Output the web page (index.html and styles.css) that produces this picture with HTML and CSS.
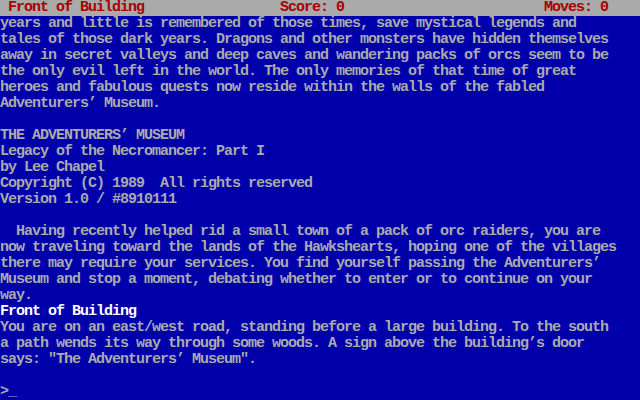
FILE: index.html
```html
<!DOCTYPE html>
<html>
<head>
<meta charset="utf-8">
<link rel="stylesheet" href="styles.css">
</head>
<body>
<div class="screen">
<div class="status"> Front of Building                 Score: 0                         Moves: 0</div>
<div class="text">
<div class="line">years and little is remembered of those times, save mystical legends and</div>
<div class="line">tales of those dark years. Dragons and other monsters have hidden themselves</div>
<div class="line">away in secret valleys and deep caves and wandering packs of orcs seem to be</div>
<div class="line">the only evil left in the world. The only memories of that time of great</div>
<div class="line">heroes and fabulous quests now reside within the walls of the fabled</div>
<div class="line">Adventurers’ Museum.</div>
<div class="line"> </div>
<div class="line">THE ADVENTURERS’ MUSEUM</div>
<div class="line">Legacy of the Necromancer: Part I</div>
<div class="line">by Lee Chapel</div>
<div class="line">Copyright (C) 1989  All rights reserved</div>
<div class="line">Version 1.0 / #8910111</div>
<div class="line"> </div>
<div class="line">  Having recently helped rid a small town of a pack of orc raiders, you are</div>
<div class="line">now traveling toward the lands of the Hawkshearts, hoping one of the villages</div>
<div class="line">there may require your services. You find yourself passing the Adventurers’</div>
<div class="line">Museum and stop a moment, debating whether to enter or to continue on your</div>
<div class="line">way.</div>
<div class="line bright">Front of Building</div>
<div class="line">You are on an east/west road, standing before a large building. To the south</div>
<div class="line">a path wends its way through some woods. A sign above the building’s door</div>
<div class="line">says: "The Adventurers’ Museum".</div>
<div class="line"> </div>
<div class="line">&gt;<span class="cursor">_</span></div>
</div>
</div>
</body>
</html>
```
FILE: styles.css
```css
html, body {
  margin: 0;
  padding: 0;
  background: #0000aa;
}
.screen {
  width: 640px;
  height: 400px;
  background: #0000aa;
  color: #aaaaaa;
  font-family: "Liberation Mono", "DejaVu Sans Mono", monospace;
  font-size: 15px;
  letter-spacing: -1px;
  line-height: 16px;
  font-weight: bold;
  overflow: hidden;
}
.status {
  height: 16px;
  background: #aaaaaa;
  color: #aa0000;
  white-space: pre;
}
.line {
  height: 16px;
  white-space: pre;
}
.bright {
  color: #ffffff;
}
.cursor {
  color: #aaaaaa;
}
```
